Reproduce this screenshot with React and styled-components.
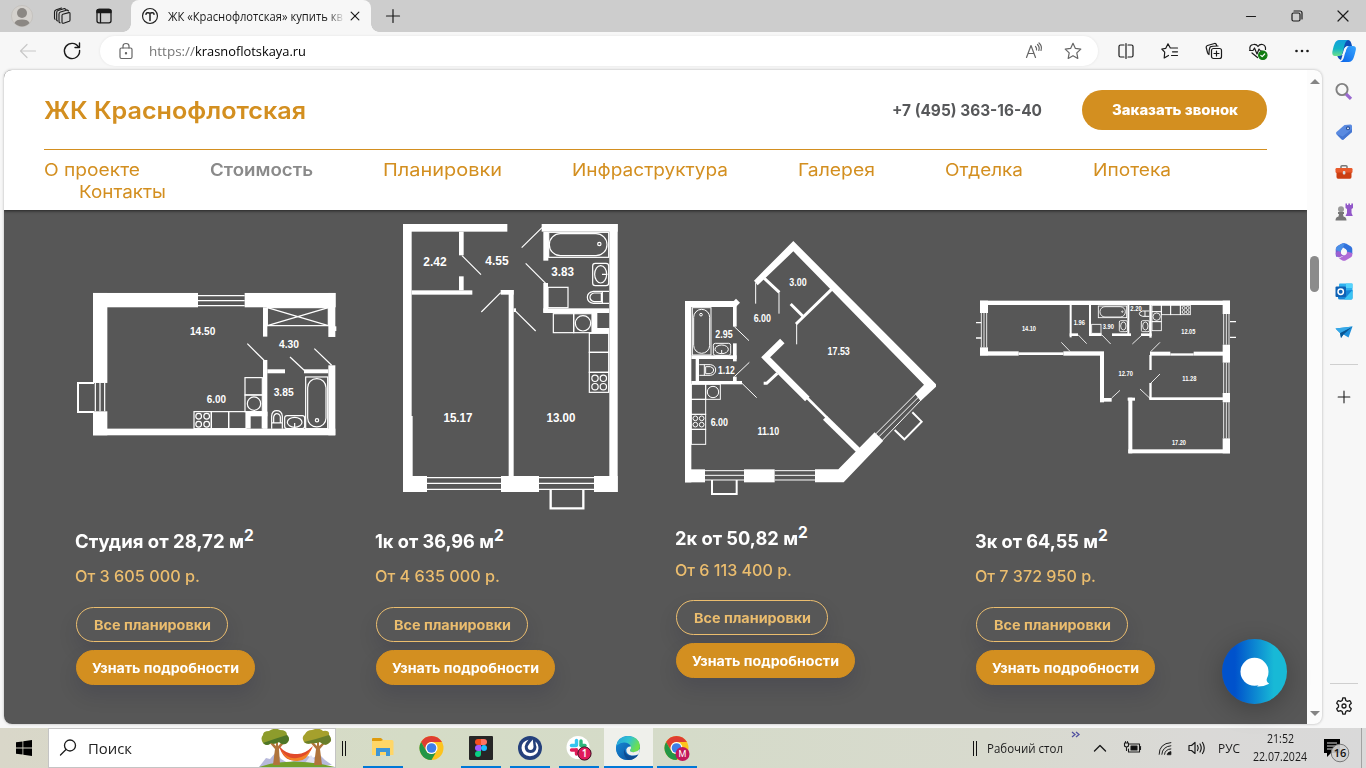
import React, { useLayoutEffect, useRef, useState } from "react";
import styled, { createGlobalStyle, css } from "styled-components";

const GlobalStyle = createGlobalStyle`
  *, *::before, *::after { box-sizing: border-box; }
  html, body { margin: 0; padding: 0; overflow: hidden; }
  body { font-family: "Open Sans", "Noto Sans", sans-serif; color: #1b1b1b; }
  svg { display: block; flex: none; }
`;

const brand = "#d38f20";
const brandLight = "#ebbd6e";
const siteFont = `Inter, "Open Sans", sans-serif`;

/* ---------- text that stretches to a given measure ---------- */

const Measure = styled.span`
  display: inline-block;
  text-align: left;
  white-space: pre;
`;

const Stretch = styled.span`
  display: inline-block;
  transform-origin: 0 50%;
`;

function Fit({ w, children }) {
  const ref = useRef(null);
  const [scale, setScale] = useState(1);
  useLayoutEffect(() => {
    const range = document.createRange();
    range.selectNodeContents(ref.current);
    const natural = range.getBoundingClientRect().width;
    setScale((current) => (w * current) / natural);
  }, [w, children]);
  return (
    <Measure style={{ width: w }}>
      <Stretch ref={ref} style={{ transform: `scaleX(${scale})` }}>
        {children}
      </Stretch>
    </Measure>
  );
}

/* ---------- window frame ---------- */

const Screen = styled.div`
  width: 1366px;
  height: 768px;
  display: flex;
  flex-direction: column;
  background: #f7f7f7;
  overflow: hidden;
`;

const TitleBar = styled.header`
  height: 32px;
  display: flex;
  align-items: center;
  background: #cdcdcd;
`;

const Cell = styled.div`
  width: ${(p) => p.$w}px;
  height: 100%;
  flex: none;
  display: flex;
  align-items: center;
  justify-content: center;
`;

const Tab = styled.div`
  position: relative;
  width: 240px;
  height: 32px;
  margin-left: 4px;
  padding: 0 4px 0 7px;
  display: flex;
  align-items: center;
  background: #f7f7f7;
  border-radius: 8px 8px 0 0;
  &::before,
  &::after {
    content: "";
    position: absolute;
    bottom: 0;
    width: 8px;
    height: 8px;
  }
  &::before {
    left: -8px;
    background: radial-gradient(circle at 0 0, transparent 7.5px, #f7f7f7 8px);
  }
  &::after {
    right: -8px;
    background: radial-gradient(circle at 100% 0, transparent 7.5px, #f7f7f7 8px);
  }
`;

const TabTitle = styled.div`
  width: 178px;
  margin-left: 6px;
  font-size: 12px;
  white-space: nowrap;
  color: #1b1b1b;
  mask-image: linear-gradient(90deg, #000 160px, transparent 177px);
`;

const Spacer = styled.div`
  flex: 1;
`;

const Toolbar = styled.div`
  height: 38px;
  padding-left: 6px;
  display: flex;
  align-items: center;
  background: #f7f7f7;
`;

const Address = styled.div`
  width: 998px;
  height: 30px;
  margin: 0 6px;
  padding: 0 6px 0 7px;
  display: flex;
  align-items: center;
  background: #fff;
  border-radius: 15px;
  box-shadow: 0 0 3px rgba(0, 0, 0, 0.08);
`;

const Url = styled.div`
  margin-left: 4px;
  font-size: 13.5px;
  color: #000;
  white-space: nowrap;
`;

const UrlScheme = styled.span`
  color: #767676;
`;

/* ---------- viewport ---------- */

const Body = styled.div`
  height: 658px;
  padding-left: 4px;
  display: flex;
`;

const Viewport = styled.div`
  width: 1318px;
  height: 654px;
  display: flex;
  border-radius: 8px;
  overflow: hidden;
  background: #fcfcfc;
  box-shadow: 0 0 3px rgba(0, 0, 0, 0.28);
`;

const Site = styled.main`
  width: 1303px;
  overflow: hidden;
  font-family: ${siteFont};
  background: #575757;
`;

const SiteHeader = styled.div`
  position: relative;
  height: 140px;
  padding: 0 40px;
  background: #fff;
  box-shadow: 0 1px 3px rgba(0, 0, 0, 0.6);
`;

const Masthead = styled.div`
  height: 80px;
  display: flex;
  align-items: center;
  border-bottom: 1px solid ${brand};
`;

const Brand = styled.h1`
  margin: 0;
  padding-top: 2px;
  flex: 1;
  font-size: 24px;
  font-weight: 600;
  color: ${brand};
`;

const Phone = styled.div`
  width: 150px;
  margin-right: 40px;
  padding-top: 1px;
  font-size: 16px;
  font-weight: 700;
  color: #57585a;
`;

const CallButton = styled.button`
  width: 185px;
  height: 40px;
  padding: 0;
  border: 0;
  border-radius: 20px;
  background: ${brand};
  color: #fff;
  font: 800 14px ${siteFont};
`;

const Nav = styled.nav`
  padding-top: 9px;
  display: flex;
  flex-wrap: wrap;
  line-height: 22px;
  font-size: 17.5px;
`;

const NavItem = styled.a`
  width: ${(p) => p.$w}px;
  margin: 0 35px;
  color: ${brand};
  white-space: nowrap;
  ${(p) => p.$first && css`margin-left: 0;`}
  ${(p) => p.$active && css`color: #8a8a8a; font-weight: 600;`}
`;

const Cards = styled.section`
  padding-left: 71px;
  display: flex;
`;

const Card = styled.article`
  width: 300px;
  display: flex;
  flex-direction: column;
  align-items: flex-start;
`;

const CardTitle = styled.h2`
  height: 28px;
  margin: ${(p) => (p.$raised ? 4 : 7)}px 0 0;
  display: flex;
  align-items: center;
  font-size: 18.5px;
  font-weight: 700;
  color: #fff;
`;

const Power = styled.sup`
  align-self: flex-start;
  font-size: 15.5px;
  line-height: 18px;
  font-weight: 700;
`;

const Price = styled.div`
  height: 30px;
  margin-top: ${(p) => (p.$raised ? 3 : 6)}px;
  display: flex;
  align-items: center;
  font-size: 16px;
  font-weight: 500;
  color: ${brandLight};
`;

const Pill = styled.button`
  width: ${(p) => (p.$outline ? 152 : 179)}px;
  height: 35px;
  margin: ${(p) => p.$top}px 0 0 1px;
  padding: 0;
  border: 1px solid ${(p) => (p.$outline ? brandLight : brand)};
  border-radius: 17.5px;
  background: ${(p) => (p.$outline ? "transparent" : brand)};
  color: ${(p) => (p.$outline ? brandLight : "#fff")};
  font: 700 13px ${siteFont};
  box-shadow: 0 10px 20px rgba(0, 11, 48, 0.12);
  white-space: nowrap;
`;

const Chat = styled.div`
  position: absolute;
  left: 1222px;
  top: 639px;
  width: 65px;
  height: 65px;
  display: flex;
  align-items: center;
  justify-content: center;
  border-radius: 50%;
  background: linear-gradient(90deg, #0052cc 20%, #18b9d6 80%);
  box-shadow: 0 6px 24px rgba(0, 0, 0, 0.25);
`;

const Scrollbar = styled.div`
  width: 15px;
  padding: 9px 0 8px;
  display: flex;
  flex-direction: column;
  align-items: center;
`;

const Arrow = styled.i`
  border: 5px solid transparent;
  ${(p) => (p.$down ? "border-top-color: #858585; border-bottom-width: 0;" : "border-bottom-color: #858585; border-top-width: 0;")}
`;

const Thumb = styled.div`
  width: 9px;
  height: 36px;
  margin-top: 172px;
  border-radius: 5px;
  background: #8b8b8b;
`;

const Sidebar = styled.aside`
  width: 44px;
  height: 656px;
  padding-top: 2px;
  display: flex;
  flex-direction: column;
  align-items: center;
`;

const SideItem = styled.div`
  height: 40px;
  margin-top: ${(p) => p.$gap || 0}px;
  display: flex;
  align-items: center;
  justify-content: center;
`;

const Rule = styled.div`
  width: 28px;
  height: 1px;
  flex: none;
  margin-top: ${(p) => p.$gap || 0}px;
  background: #cfcfcf;
`;

/* ---------- taskbar ---------- */

const Taskbar = styled.footer`
  height: 40px;
  display: flex;
  align-items: stretch;
  background: linear-gradient(90deg, #d9d7c9 0, #d5dcc6 30%, #d5dbc9 50%, #d8dace 72%, #dad9d7 88%, #d9d9d9 100%);
`;

const Search = styled.div`
  width: 288px;
  padding-left: 9px;
  display: flex;
  align-items: center;
  border: 1px solid #c4c4c4;
  background: #fff;
  font-size: 14.5px;
  color: #222;
`;

const SearchText = styled.div`
  flex: 1;
  margin-left: 10px;
`;

const Grip = styled.div`
  width: 4px;
  height: 15px;
  margin: 13px ${(p) => p.$right}px 0 ${(p) => p.$left}px;
  flex: none;
  border: solid #111;
  border-width: 0 1px;
`;

const Task = styled.div`
  width: 49px;
  display: flex;
  flex-direction: column;
  align-items: center;
  justify-content: space-between;
  padding-top: 7px;
  background: ${(p) => (p.$active ? "#eff0eb" : "transparent")};
  &::after {
    content: "";
    width: ${(p) => (p.$active ? 49 : 40)}px;
    height: 2px;
    background: ${(p) => (p.$open ? "#0078d7" : "transparent")};
  }
`;

const DesktopLabel = styled.div`
  width: 81px;
  align-self: center;
  font-size: 12px;
`;

const More = styled.div`
  width: 16px;
  padding-top: 3px;
`;

const Clock = styled.div`
  width: 68px;
  display: flex;
  flex-direction: column;
  align-items: center;
  font-size: 12px;
  line-height: 18px;
  padding-top: 2px;
`;

const Lang = styled.div`
  width: 34px;
  display: flex;
  align-items: center;
  justify-content: center;
  font-size: 12px;
`;

const ShowDesktop = styled.div`
  width: 5px;
  border-left: 1px solid #a2a2a2;
`;

/* ---------- icons ---------- */

function Icon({ s = 20, c = "#1b1b1b", w = 1.2, children }) {
  return (
    <svg width={s} height={s} viewBox="0 0 20 20" fill="none" stroke={c} strokeWidth={w} strokeLinecap="round" strokeLinejoin="round">
      {children}
    </svg>
  );
}

const Profile = () => (
  <svg width="22" height="22" viewBox="0 0 22 22">
    <circle cx="11" cy="11" r="10.6" fill="#d4d1cd" stroke="#bdbab6" strokeWidth=".6" />
    <circle cx="11" cy="8" r="5" fill="#8b8783" />
    <path d="M3.5 18a7.7 4.5 0 0 1 15 0 10 10 0 0 1-15 0Z" fill="#8b8783" />
  </svg>
);

const Workspaces = () => (
  <Icon w={1.1}>
    <path d="M9.800 8.300 15.800 6.600Q17 6.400 17 7.600V14Q17 15 16.200 15.300L10.600 17.200Q9 17.600 9 16V9.500Q9 8.600 9.800 8.300Z" />
    <path d="M14.300 4 7.500 6Q6 6.500 6 8V16L7 16.800M11.500 2.500 5 4.500Q3.700 5 3.700 6.500V14.300L4.500 15M8.500 2 3.300 3.800Q1.500 4.500 1.500 6V12Q1.500 13 2 13.300M14.300 4 15.500 5M11.500 2.500 13 3.500" />
  </Icon>
);

const TabPane = () => (
  <Icon w={1.3}>
    <rect x="3" y="3.300" width="14" height="13.500" rx="2" />
    <path d="M3 5Q3 3.300 5 3.300H15Q17 3.300 17 5V6.500H3Z" fill="#1b1b1b" />
    <path d="M6.500 7V16.500" />
  </Icon>
);

const Favicon = () => (
  <Icon s={18} c="#222" w={1.3}>
    <circle cx="10" cy="10" r="8.300" />
    <path d="M5.500 8Q6 6 8 6.500L10 7 12 6.500Q14 6 14.500 8M10 7V15" strokeWidth="1.700" />
  </Icon>
);

const Cross = ({ s = 20 }) => (
  <Icon s={s} w={1.3}>
    <path d="M5.700 5.700 14.300 14.300M14.300 5.700 5.700 14.300" />
  </Icon>
);

const Plus = ({ s = 20 }) => (
  <Icon s={s}>
    <path d="M10 3.500V16.500M3.500 10H16.500" />
  </Icon>
);

const Copilot = () => (
  <svg width="24" height="22" viewBox="0 0 24 22">
    <defs>
      <linearGradient id="cpA" x1="0" y1="0" x2="0" y2="1">
        <stop offset="0" stopColor="#13a0dc" />
        <stop offset=".55" stopColor="#13b5c6" />
        <stop offset="1" stopColor="#6fe08a" />
      </linearGradient>
      <linearGradient id="cpB" x1="1" y1="0" x2="0" y2="1">
        <stop offset="0" stopColor="#37a6ff" />
        <stop offset="1" stopColor="#0a62e8" />
      </linearGradient>
    </defs>
    <path d="M7 0H16Q18.500 0 19.500 4L20 6H16Q13.500 6 12.500 9L9 20Q6 19 5 15L3 10Z" fill="#0d4fb8" />
    <path d="M7 0H16Q13.500 1 12.500 5L10.500 13Q10 16 7 16H3Q0 16 .3 12Q2 4 3.500 2Q5 0 7 0Z" fill="url(#cpA)" />
    <path d="M17 6H21Q24.500 6 23.800 10Q22 18 20.500 20Q19 22 17 22H8Q11 21 12 17L14 9Q15 6 17 6Z" fill="url(#cpB)" />
    <path d="M14.500 6.500H16.500Q14.800 7.500 14.300 9.500L13.300 12.500Q12.500 15 9.500 15.500 10.500 14.500 11.200 12L12 9Q12.700 7 14.500 6.500Z" fill="#f5fbff" />
  </svg>
);

const SideSearch = () => (
  <svg width="20" height="20" viewBox="0 0 20 20" fill="none">
    <circle cx="8" cy="7.500" r="5.600" stroke="#818181" strokeWidth="1.900" />
    <path d="M12 12 17 16.800" stroke="#9a69cf" strokeWidth="3.200" />
  </svg>
);

const SideTag = () => (
  <svg width="20" height="20" viewBox="0 0 20 20">
    <path d="M10.500 3 16.500 2.500Q18 2.500 18 4V10L9.500 17.500Q8.500 18.200 7.500 17.200L2.300 12Q1.500 11 2.500 10Z" fill="#5a8ae0" />
    <path d="M2.300 12 7.500 17.200Q8.500 18 9.500 17.500L18 10V7L8.700 14.500Z" fill="#4677d2" />
    <circle cx="14" cy="6.300" r="2" fill="#264f9b" />
    <circle cx="14" cy="6.300" r=".9" fill="#fff" />
  </svg>
);

const SideTools = () => (
  <svg width="20" height="20" viewBox="0 0 20 20">
    <path d="M7 6V4.500Q7 3.700 8 3.700H12Q13 3.700 13 4.500V6" fill="none" stroke="#777" strokeWidth="1.500" />
    <rect x="1.500" y="6" width="17" height="5" rx="1.200" fill="#e8592a" />
    <path d="M2.500 10.500H17.500V15Q17.500 16.700 16 16.700H4Q2.500 16.700 2.500 15Z" fill="#cb3f12" />
    <rect x="8.800" y="9" width="2.600" height="3.500" rx="1" fill="#d6e0e4" />
  </svg>
);

const SideGames = () => (
  <svg width="20" height="20" viewBox="0 0 20 20">
    <path d="M11.500 1.500H13V3H14.300V1.500H16V3H17.300V1.500H19V6L17.500 7V11L18.800 14H11.500L13 11V7L11.500 6Z" fill="#9257c9" />
    <circle cx="7" cy="7.300" r="3" fill="#999" />
    <path d="M4 10H10V12H9L9.500 14.500Q12.500 15 12.500 18.500H1.500Q1.500 15 4.500 14.500L5 12H4Z" fill="#777" />
  </svg>
);

const Side365 = () => (
  <svg width="20" height="20" viewBox="0 0 20 20">
    <path d="M7 2Q9 1 11 1.300L8 7Q6.500 8 6.700 10L6.500 14 2.500 15Q1.500 14 1.700 11V7Q2 5 4 3.800Z" fill="#6f62d2" />
    <path d="M8.500 1.500H12L17 4.500Q18.300 5.500 18.300 7V12L12.800 12V9.500Q13 8 11.500 7L7.500 4.500Z" fill="#3272dc" />
    <path d="M18.300 11V13Q18.300 14.500 17 15.300L12 18.300Q10 19.300 8 18.300L5 16.500 10.500 13.200Q12.800 12.500 12.800 9.500Z" fill="#b06bd6" />
    <path d="M1.700 11Q2 14.500 5 15.500L10.500 13.200Q7 13 6.700 10V7Z" fill="#9c5fd0" />
    <path d="M7 2Q9 1 11 1.300L8 7 6.700 10 2 8Q1.500 5 4 3.800Z" fill="#4a8fe6" />
    <circle cx="10" cy="10" r="2.900" fill="#f7f7f7" />
  </svg>
);

const SideOutlook = () => (
  <svg width="20" height="20" viewBox="0 0 20 20">
    <rect x="5" y="1.500" width="13.500" height="9" rx="1" fill="#2eb1ef" />
    <path d="M12 1.500H18.500V6H12Z" fill="#54d4fc" />
    <path d="M4 9 18.500 8V16Q18.500 17.500 17 17.500H6Q4 17.500 4 16Z" fill="#1585d8" />
    <path d="M18.500 8 10 17.500H17Q18.500 17.500 18.500 16Z" fill="#39c4f3" />
    <rect x="1.500" y="4.500" width="10.500" height="10.500" rx="1" fill="#0f62b5" />
    <circle cx="6.700" cy="9.700" r="2.700" fill="none" stroke="#fff" strokeWidth="1.500" />
  </svg>
);

const SideDrop = () => (
  <svg width="20" height="20" viewBox="0 0 20 20">
    <path d="M1.500 6.500 18.500 4.500 14.500 15.500 9.500 12.500 7 16 6 11Z" fill="#1d8fdb" />
    <path d="M6 11 18.500 4.500 9.500 12.500 7 16Z" fill="#0a5693" />
    <path d="M1.500 6.500 18.500 4.500 6 11Z" fill="#36a9e8" />
  </svg>
);

const Gear = () => (
  <Icon w={1.300}>
    <path d="M8.200 4.500 8.800 2Q10 1.700 11.200 2L11.800 4.500 13.400 5.400 15.800 4.600Q17 6 17.300 7.300L15.500 9V11L17.300 12.700Q17 14 15.800 15.400L13.400 14.600 11.800 15.500 11.200 18Q10 18.300 8.800 18L8.200 15.500 6.600 14.600 4.200 15.400Q3 14 2.700 12.700L4.500 11V9L2.700 7.300Q3 6 4.200 4.600L6.600 5.400Z" />
    <circle cx="10" cy="10" r="2" />
  </Icon>
);

const Windows = () => (
  <svg width="16" height="16" viewBox="0 0 16 16">
    <path d="M0 2.300 6.500 1.400V7.500H0ZM7.300 1.200 16 0V7.500H7.300ZM0 8.400H6.500V14.600L0 13.700ZM7.300 8.400H16V16L7.300 14.700Z" fill="#000" />
  </svg>
);

const Hammock = () => (
  <svg width="76" height="38" viewBox="0 0 76 38">
    <path d="M0 38 7 29 11 30 17 23 22 30 29 34 49 27 54 29 60 25 66 31 73 36Z" fill="#b7b9db" />
    <path d="M46 34 52 26 58 34Z" fill="#dfe0f2" />
    <path d="M0 38Q32 27 76 38Z" fill="#72a12a" />
    <path d="M14 36 16 20 9 12 11 11 17 17 17 8H19V17L25 11 27 12 20 20 21 36Z" fill="#b0743b" />
    <path d="M55 36 57 20 50 12 52 11 58 17 58 8H60V17L67 11 68 12 61 20 63 36Z" fill="#b0743b" />
    <path d="M4 6Q4 2 10 2Q16-2 21 1Q28 1 28 6Q32 10 28 14Q24 17 20 13Q15 16 12 14Q8 18 4 14Q1 9 4 6Z" fill="#8d9c2c" />
    <path d="M28 6Q32 10 28 14Q24 17 20 13Q15 16 12 14Q8 18 4 14Q15 10 28 6Z" fill="#4e7628" />
    <path d="M46 5Q48 1 53 1Q60-2 64 2Q71 1 70 6Q74 11 70 14Q66 18 61 13Q55 15 53 14Q48 16 45 13Q42 8 46 5Z" fill="#a5a02c" />
    <path d="M70 6Q74 11 70 14Q66 18 61 13Q55 15 53 14Q48 16 45 13Q58 10 70 6Z" fill="#687e2b" />
    <path d="M20 17Q25 34 39 31Q50 28 54 17Q45 26 37 25Q28 26 20 17Z" fill="#e14a2a" />
    <path d="M22 21Q29 31 38 29Q47 28 52 20Q48 33 37 32Q26 31 22 21Z" fill="#f38326" />
  </svg>
);

const Folder = () => (
  <svg width="24" height="24" viewBox="0 0 24 24">
    <path d="M1 4Q1 3 2 3H10L12 5V9H1Z" fill="#df9b0c" />
    <path d="M1 6H10L12 5H21Q22.500 5 22.500 6.500V20H1Z" fill="#ffd667" />
    <path d="M5 13H19V21H15V17H9V21H5Z" fill="#3f96d6" />
  </svg>
);

const ChromeMark = ({ children }) => (
  <svg width="26" height="26" viewBox="0 0 26 26">
    <circle cx="12.500" cy="13" r="12" fill="#fcc31e" />
    <path d="M2.100 7A12 12 0 0 1 22.900 7H12.500A6 6 0 0 0 7.300 16Z" fill="#df3d32" />
    <path d="M2.100 7A12 12 0 0 0 12.500 25L17.700 16A6 6 0 0 1 7.300 16Z" fill="#239646" />
    <circle cx="12.500" cy="13" r="6" fill="#fff" />
    <circle cx="12.500" cy="13" r="4.800" fill="#3f7ee8" />
    {children}
  </svg>
);

const FigmaMark = () => (
  <svg width="26" height="26" viewBox="0 0 26 26">
    <rect x="1" y="1" width="24" height="24" rx="1" fill="#262626" />
    <path d="M13 4H10a3 3 0 0 0 0 6H13Z" fill="#f24e1e" />
    <path d="M13 4H16a3 3 0 0 1 0 6H13Z" fill="#ff7262" />
    <path d="M13 10H10a3 3 0 0 0 0 6H13Z" fill="#a259ff" />
    <circle cx="16" cy="13" r="3" fill="#1abcfe" />
    <path d="M13 16H10a3 3 0 1 0 3 3Z" fill="#0acf83" />
  </svg>
);

const Mattermost = () => (
  <svg width="26" height="26" viewBox="0 0 26 26">
    <circle cx="13" cy="13" r="12" fill="#24407c" />
    <path d="M11.500 4.800Q4.500 6.500 4.500 13Q5 20.500 13 21.300Q21 20.500 21.500 13.500Q21.500 9 18.500 6.500L18.800 9.500Q20 11.500 19 14.500Q17.500 18 13.500 18Q7.500 17.500 7.700 11.500Q8.200 8 11.500 4.800Z" fill="#fff" />
    <path d="M15.800 4.500 16.500 11.500Q16.500 14.700 13.500 15Q10.500 14.700 10.800 11.500Q11.500 9.500 15.800 4.500Z" fill="#fff" />
  </svg>
);

const SlackMark = () => (
  <svg width="26" height="26" viewBox="0 0 26 26">
    <circle cx="12" cy="12.500" r="11.500" fill="#fff" />
    <g strokeWidth="3.400" strokeLinecap="round">
      <path d="M10.500 5.500V10" stroke="#36c5f0" />
      <path d="M5.500 10.500H10" stroke="#36c5f0" />
      <path d="M15 6V10.500" stroke="#2eb67d" />
      <path d="M15.500 10.500H19" stroke="#2eb67d" />
      <path d="M5.500 15H10.500" stroke="#e01e5a" />
      <path d="M10.500 15V19" stroke="#e01e5a" />
      <path d="M15 15H19" stroke="#ecb22e" />
    </g>
    <circle cx="18.500" cy="18.500" r="6.600" fill="#e0195b" stroke="#3c1022" strokeWidth="1" />
    <text x="18.500" y="22" textAnchor="middle" fontSize="10" fontWeight="600" fontFamily="Open Sans" fill="#fff">1</text>
  </svg>
);

const EdgeMark = () => (
  <svg width="26" height="26" viewBox="0 0 26 26">
    <defs>
      <linearGradient id="edA" x1="0" y1="0" x2="1" y2=".4">
        <stop offset="0" stopColor="#249de0" />
        <stop offset=".55" stopColor="#31c4cf" />
        <stop offset="1" stopColor="#6fe04c" />
      </linearGradient>
      <linearGradient id="edB" x1="0" y1="0" x2="1" y2="1">
        <stop offset="0" stopColor="#1687d4" />
        <stop offset="1" stopColor="#0c529d" />
      </linearGradient>
    </defs>
    <circle cx="13" cy="13" r="12" fill="#1275c8" />
    <path d="M1 12Q2.500 1 13 1Q24 1.500 25 11Q25 17 18.500 17.300Q14.500 17 15 15Q16.500 13.500 16 11.500Q14 7.500 9 7.500Q3.500 8 1 12Z" fill="url(#edA)" />
    <path d="M1 13Q4 7.500 9.500 8Q14.500 8.500 16 12Q12 9.500 9.500 14Q7.500 22 15 24.800Q2 26 1 13Z" fill="url(#edB)" />
    <path d="M9.500 14Q10 20.500 17 21Q20.500 21 23.500 19.200Q20 25 13.500 25Q7 21 9.500 14Z" fill="#0f4c92" />
    <path d="M16 11.500Q16.500 13.500 15 15Q14.500 17 18.500 17.300Q22 17.300 25 14Q24.500 17.500 23.500 19.200Q20 21 16.500 20.500Q11 19.500 11.300 14.500Q12.500 11 16 11.500Z" fill="#eff0eb" />
  </svg>
);

/* ---------- floor plans ---------- */

const wallBox = ([x, y, w, h], i) => <rect key={i} x={x} y={y} width={w - x} height={h - y} fill="#fff" stroke="none" />;
const lineBox = ([x, y, w, h], i) => <rect key={i} x={x} y={y} width={w - x} height={h - y} />;

function Plan({ x, ox, oy, walls, boxes = [], lines = "", labels, size, lineWidth = 3.6, children }) {
  return (
    <svg width="270" height="310" viewBox={`${x} 210 270 310`}>
      <g transform={`translate(${ox} ${oy}) scale(.33333)`} fill="none" stroke="#fff" strokeWidth={lineWidth}>
        {walls.map(wallBox)}
        {boxes.map(lineBox)}
        <path d={lines} />
        {children}
        {labels.map(([t, lx, ly, w], i) => (
          <text key={i} x={lx} y={ly + size * 0.36} textAnchor="middle" textLength={w} fontSize={size} fontWeight="700" fontFamily="Liberation Sans, sans-serif" fill="#fff" stroke="none" lengthAdjust="spacingAndGlyphs">
            {t}
          </text>
        ))}
      </g>
    </svg>
  );
}

const Burners = ({ x, y, d, r }) => (
  <>
    <circle cx={x} cy={y} r={r} />
    <circle cx={x + d} cy={y} r={r} />
    <circle cx={x} cy={y + d} r={r} />
    <circle cx={x + d} cy={y + d} r={r} />
  </>
);

const StudioPlan = () => (
  <Plan
    x={75} ox={60} oy={270.3} size={35}
    walls={[
      [99, 68, 414, 111], [554, 68, 827, 111], [99, 68, 142, 338], [99, 423, 142, 495], [99, 475, 826, 495],
      [805, 68, 826, 200], [805, 285, 826, 495], [609, 111, 622, 199], [609, 269, 622, 475], [622, 297, 675, 309],
      [732, 297, 805, 309], [558, 424, 622, 438], [558, 424, 572, 475], [605, 424, 622, 475], [820, 168, 829, 182],
    ]}
    boxes={[
      [622, 112, 805, 166], [555, 322, 607, 374], [555, 374, 607, 424], [402, 424, 454, 475], [454, 424, 506, 475],
      [506, 424, 558, 475], [737, 320, 803, 475],
    ]}
    lines="M414 76H554M414 91H554M414 106H554M106 338V423M120 338V423M134 338V423M622 112 805 166M805 112 622 166M562 220 612 270M690 260 735 302M763 235 815 285M704 458V472"
    labels={[["14.50", 428, 183, 76], ["4.30", 687, 221, 60], ["3.85", 671, 366, 60], ["6.00", 469, 386, 58]]}
  >
    <path d="M102 338H54V425H102" strokeWidth="6" />
    <circle cx="582" cy="400" r="20" />
    <Burners x={416} y={438} d={24} r={8.500} />
    <rect x="743" y="325" width="55" height="145" rx="27" />
    <circle cx="771" cy="450" r="5" />
    <rect x="674" y="436" width="60" height="39" rx="7" />
    <ellipse cx="704" cy="456" rx="22" ry="15" />
    <path d="M635 475V437Q636 421 650 421Q665 421 667 437V475M635 458H667M641 457V440Q643 430 650 430Q659 430 661 440V457" />
  </Plan>
);

const OneRoomPlan = () => (
  <Plan
    x={375} ox={390} oy={215} size={40}
    walls={[
      [39, 27, 65, 831], [39, 27, 352, 50], [455, 27, 683, 50], [658, 27, 683, 831], [39, 783, 111, 831],
      [333, 783, 447, 831], [612, 783, 683, 831], [207, 50, 221, 121], [207, 184, 221, 226], [65, 226, 247, 239],
      [332, 225, 371, 239], [356, 225, 371, 783], [371, 280, 378, 291], [460, 50, 475, 137], [460, 204, 474, 293],
      [460, 280, 658, 294], [606, 294, 622, 354], [606, 339, 658, 354], [62, 603, 68, 783],
    ]}
    boxes={[
      [474, 217, 534, 278], [490, 296, 551, 353], [551, 296, 606, 353], [598, 355, 656, 412], [598, 412, 656, 472],
      [598, 472, 656, 532], [476, 52, 656, 127],
    ]}
    lines="M111 788H333M111 805H333M111 823H333M447 788H612M447 805H612M447 823H612M395 98 456 38M216 122 273 179M407 145 467 205M332 233 274 291M375 287 437 348M636 178H652"
    labels={[["2.42", 135, 138, 70], ["4.55", 321, 137, 70], ["3.83", 518, 169, 68], ["15.17", 204, 608, 87], ["13.00", 513, 608, 87]]}
  >
    <path d="M482 823V880H580V823" strokeWidth="7" />
    <circle cx="579" cy="325" r="23" />
    <Burners x={615} y={490} d={25} r={9.500} />
    <rect x="478" y="56" width="173" height="66" rx="33" />
    <circle cx="628" cy="87" r="5" />
    <rect x="608" y="145" width="48" height="67" rx="8" />
    <ellipse cx="632" cy="178" rx="18" ry="26" />
    <path d="M657 229H610Q592 232 592 247Q592 263 610 265H657M637 229V265M634 234H612Q600 237 600 247Q600 257 612 260H634Z" />
  </Plan>
);

const TwoRoomPlan = () => (
  <Plan
    x={675} ox={670} oy={230} size={32} lineWidth={3}
    walls={[
      [45, 213, 64, 757], [45, 213, 197, 231], [189, 220, 200, 290], [64, 376, 200, 387], [189, 340, 200, 394],
      [64, 453, 216, 463], [77, 387, 87, 453], [189, 440, 200, 460], [45, 718, 105, 757], [222, 718, 314, 757],
    ]}
    boxes={[
      [64, 463, 107, 508], [64, 508, 107, 553], [64, 553, 107, 598], [64, 598, 107, 643], [107, 463, 151, 508], [67, 233, 123, 375],
    ]}
    lines="M105 722H222M105 736H222M105 750H222M314 722H435M314 736H435M314 750H435M739 490 617 612M747 500 627 620M755 508 638 630M257 158V221M327 187V251M380 282V343M193 290 237 332M193 440 238 397M216 460 260 503M155 360V371"
    labels={[["3.00", 384, 155, 52], ["6.00", 277, 265, 52], ["2.95", 162, 311, 52], ["17.53", 506, 362, 67], ["1.12", 169, 420, 50], ["6.00", 148, 577, 52], ["11.10", 295, 603, 65]]}
  >
    <g fill="#fff" stroke="none">
      <path d="M370 33 798 463V470L752 513 735 492 762 464 370 64 263 166 252 152Z" />
      <path d="M435 718H505L614 607 640 632 521 757H435Z" />
      <path d="M198 206 210 218 198 230 186 218Z" />
    </g>
    <path d="M283 145 328 187M487 176 378 282M362 222 398 258M322 430 290 460H281" strokeWidth="9" />
    <path d="M337 333 287 382 412 507" strokeWidth="19" />
    <path d="M412 504 470 562" strokeWidth="8" />
    <path d="M465 563 568 664" strokeWidth="17" />
    <path d="M126 750V792H200V750M727 547 755 575 703 628 674 600" strokeWidth="6" />
    <circle cx="129" cy="486" r="17" />
    <Burners x={76} y={565} d={19} r={7} />
    <rect x="71" y="238" width="48" height="132" rx="24" />
    <circle cx="93" cy="254" r="4" />
    <rect x="130" y="340" width="52" height="36" rx="6" />
    <ellipse cx="155" cy="358" rx="20" ry="13" />
    <path d="M88 404H122Q137 407 137 420Q137 433 122 436H88M103 404V436M107 410H121Q131 413 131 420Q131 428 121 431H107Z" />
  </Plan>
);

const ThreeRoomPlan = () => (
  <Plan
    x={975} ox={960} oy={280} size={23} lineWidth={2.600}
    walls={[
      [60, 62, 810, 75], [60, 62, 84, 99], [60, 202, 84, 226], [60, 214, 176, 227], [176, 217, 310, 225], [310, 214, 432, 227],
      [329, 75, 335, 172], [329, 160, 354, 168], [387, 75, 393, 168], [387, 160, 425, 168], [456, 160, 513, 168],
      [502, 75, 508, 168], [568, 75, 575, 173], [543, 160, 575, 168], [788, 62, 810, 102], [788, 194, 810, 248],
      [788, 339, 810, 367], [788, 475, 810, 520], [570, 215, 631, 227], [631, 220, 701, 227], [701, 215, 790, 227],
      [420, 220, 432, 367], [430, 354, 455, 365], [503, 353, 525, 362], [505, 353, 517, 520], [505, 508, 810, 520],
      [568, 352, 790, 360], [568, 225, 575, 270], [568, 309, 575, 358],
    ]}
    boxes={[
      [395, 133, 423, 160], [415, 78, 500, 113], [576, 76, 604, 95], [576, 95, 604, 125], [576, 125, 604, 152],
      [604, 76, 632, 104], [632, 76, 661, 104], [661, 76, 691, 104],
    ]}
    lines="M64 99V202M72 99V202M80 99V202M791 102V194M799 102V194M807 102V194M791 248V339M799 248V339M807 248V339M791 367V475M799 367V475M807 367V475M304 187 330 214M354 164 380 191M425 164 452 192M517 192 545 166M600 187 572 215M572 310 600 282M455 354 480 331M540 327 570 355"
    labels={[["14.10", 207, 146, 42], ["1.96", 358, 126, 34], ["3.90", 445, 139, 34], ["2.20", 528, 85, 34], ["12.05", 685, 153, 42], ["12.70", 497, 281, 43], ["11.28", 688, 295, 42], ["17.20", 657, 488, 42]]}
  >
    <path d="M48 128H64M48 174H64M810 125H828M810 172H828" strokeWidth="4" />
    <rect x="420" y="80" width="76" height="31" rx="15" />
    <circle cx="487" cy="95" r="2" />
    <rect x="478" y="122" width="24" height="33" rx="4" />
    <ellipse cx="490" cy="138" rx="8" ry="12" />
    <rect x="544" y="122" width="24" height="33" rx="4" />
    <ellipse cx="556" cy="138" rx="8" ry="12" />
    <path d="M568 93H548Q538 95 538 101Q538 107 548 109H568M555 93V109" strokeWidth="3" />
    <circle cx="590" cy="110" r="11" />
    <Burners x={671} y={84} d={12} r={4.500} />
  </Plan>
);

/* ---------- content ---------- */

const navItems = [
  ["О проекте", 96], ["Стоимость", 103], ["Планировки", 119], ["Инфраструктура", 156],
  ["Галерея", 77], ["Отделка", 78], ["Ипотека", 78], ["Контакты", 87],
];

const flats = [
  { title: "Студия от 28,72 м", w: 169, price: "От 3 605 000 р.", pw: 125, plan: StudioPlan },
  { title: "1к от 36,96 м", w: 119, price: "От 4 635 000 р.", pw: 125, plan: OneRoomPlan },
  { title: "2к от 50,82 м", w: 123, price: "От 6 113 400 р.", pw: 117, plan: TwoRoomPlan, raised: true },
  { title: "3к от 64,55 м", w: 123, price: "От 7 372 950 р.", pw: 121, plan: ThreeRoomPlan },
];

const sideIcons = [SideSearch, SideTag, SideTools, SideGames, Side365, SideOutlook, SideDrop];

function Flat({ flat }) {
  const { title, w, price, pw, plan: PlanDrawing, raised } = flat;
  return (
    <Card>
      <PlanDrawing />
      <CardTitle $raised={raised}>
        <Fit w={w}>{title}</Fit>
        <Power>2</Power>
      </CardTitle>
      <Price $raised={raised}><Fit w={pw}>{price}</Fit></Price>
      <Pill $outline $top={raised ? 15 : 16}><Fit w={117}>Все планировки</Fit></Pill>
      <Pill $top={8}><Fit w={147}>Узнать подробности</Fit></Pill>
    </Card>
  );
}

export default function App() {
  return (
    <Screen>
      <GlobalStyle />
      <TitleBar>
        <Cell $w={44}><Profile /></Cell>
        <Cell $w={37}><Workspaces /></Cell>
        <Cell $w={46}><TabPane /></Cell>
        <Tab>
          <Cell $w={24}><Favicon /></Cell>
          <TabTitle><Fit w={175}>ЖК «Краснофлотская» купить кв</Fit></TabTitle>
          <Cell $w={18}><Cross s={18} /></Cell>
        </Tab>
        <Cell $w={43}><Plus /></Cell>
        <Spacer />
        <Cell $w={46}><Icon><path d="M5.500 10.500H14.500" /></Icon></Cell>
        <Cell $w={46}>
          <Icon>
            <rect x="5" y="7" width="8" height="8" rx="1.500" />
            <path d="M7 5H13Q15 5 15 7V13" />
          </Icon>
        </Cell>
        <Cell $w={46}><Icon><path d="M5 5 15 15M15 5 5 15" /></Icon></Cell>
      </TitleBar>

      <Toolbar>
        <Cell $w={44}><Icon c="#c8c8c8"><path d="M17.500 10H2.500M9 3.500 2.500 10 9 16.500" /></Icon></Cell>
        <Cell $w={44}><Icon w={1.400}><path d="M16.500 6A7.600 7.600 0 1 0 17.600 9.500M17.500 2V6.500H13" /></Icon></Cell>
        <Address>
          <Cell $w={38}>
            <Icon c="#666">
              <rect x="4" y="7" width="12" height="10.500" rx="1.500" />
              <path d="M7 7V5Q7 2.500 10 2.500Q13 2.500 13 5V7" />
              <circle cx="10" cy="12.200" r=".6" fill="#666" />
            </Icon>
          </Cell>
          <Url><UrlScheme><Fit w={46}>https://</Fit></UrlScheme><Fit w={111}>krasnoflotskaya.ru</Fit></Url>
          <Spacer />
          <Cell $w={40}>
            <Icon c="#666">
              <path d="M2.500 16.500 7 4.500 11.500 16.500M4 12.500H10M11.500 5.500Q13 7 12.500 9M13.500 3.500Q16 6 14.800 9.500M15 2Q18.500 5 17 9.500" />
            </Icon>
          </Cell>
          <Cell $w={38}>
            <Icon c="#666"><path d="M10 2.300 12.400 7.400 17.800 8.100 13.800 11.900 14.800 17.400 10 14.700 5.200 17.400 6.200 11.900 2.200 8.100 7.600 7.400Z" /></Icon>
          </Cell>
        </Address>
        <Cell $w={44}><Icon><path d="M8 4H4.500Q3 4 3 5.500V14.500Q3 16 4.500 16H8M12 4H15.500Q17 4 17 5.500V14.500Q17 16 15.500 16H12M10 2.500V17.500" /></Icon></Cell>
        <Cell $w={44}><Icon><path d="M17.500 7H10.300L8 2.800 5.800 7.300 1.800 8 4.700 11.200 4.200 17 8.500 14.500M12.500 10.800H17.500M11.500 14.500H17.500" /></Icon></Cell>
        <Cell $w={44}>
          <Icon>
            <rect x="7.500" y="7.500" width="10" height="10" rx="2" />
            <path d="M12.500 10V15M10 12.500H15M5 13.500Q4 13 3.500 11.500L2.200 6.500Q2 5 3.500 4.500L10.500 2.500Q12 2.200 12.500 4V5M5 13.500Q5 7 6.500 5.700Q7.500 5 14 5" />
          </Icon>
        </Cell>
        <Cell $w={44}>
          <Icon>
            <path d="M2 9Q1 4 5.500 3.500Q8.500 3 10 5.500Q11.500 3 14.500 3.500Q18 4.500 17.500 8.500M1.500 9.500H5L6.500 7 9 13 11 8 12.500 10H14M4 12 9.500 16.500" />
            <circle cx="14.800" cy="14.300" r="4.200" fill="#107c10" stroke="#107c10" />
            <path d="M12.800 14.300 14.200 15.700 16.700 13" stroke="#fff" />
          </Icon>
        </Cell>
        <Cell $w={44}>
          <Icon><g fill="#1b1b1b" stroke="none"><circle cx="4.500" cy="10" r="1.300" /><circle cx="10" cy="10" r="1.300" /><circle cx="15.500" cy="10" r="1.300" /></g></Icon>
        </Cell>
        <Cell $w={40}><Copilot /></Cell>
      </Toolbar>

      <Body>
        <Viewport>
          <Site>
            <SiteHeader>
              <Masthead>
                <Brand><Fit w={262}>ЖК Краснофлотская</Fit></Brand>
                <Phone><Fit w={150}>+7 (495) 363-16-40</Fit></Phone>
                <CallButton><Fit w={126}>Заказать звонок</Fit></CallButton>
              </Masthead>
              <Nav>
                {navItems.map(([label, w], i) => (
                  <NavItem key={label} $w={w} $first={i === 0} $active={i === 1}><Fit w={w}>{label}</Fit></NavItem>
                ))}
              </Nav>
            </SiteHeader>
            <Cards>
              {flats.map((flat) => <Flat key={flat.title} flat={flat} />)}
            </Cards>
          </Site>
          <Scrollbar>
            <Arrow />
            <Thumb />
            <Spacer />
            <Arrow $down />
          </Scrollbar>
        </Viewport>
        <Sidebar>
          {sideIcons.map((Side, i) => <SideItem key={i}><Side /></SideItem>)}
          <Rule $gap={12} />
          <SideItem $gap={12}><Plus s={18} /></SideItem>
          <Spacer />
          <Rule />
          <SideItem $gap={2}><Gear /></SideItem>
        </Sidebar>
      </Body>

      <Taskbar>
        <Cell $w={48}><Windows /></Cell>
        <Search>
          <Icon s={20} w={1.300}><circle cx="12" cy="7.500" r="5.500" /><path d="M8 11.500 2.500 17" /></Icon>
          <SearchText><Fit w={44}>Поиск</Fit></SearchText>
          <Hammock />
        </Search>
        <Grip $left={6} $right={12.5} />
        <Task $open><Folder /></Task>
        <Task><ChromeMark /></Task>
        <Task $open><FigmaMark /></Task>
        <Task $open><Mattermost /></Task>
        <Task $open><SlackMark /></Task>
        <Task $open $active><EdgeMark /></Task>
        <Task $open>
          <ChromeMark>
            <circle cx="18.500" cy="19" r="7" fill="#c2185b" />
            <text x="18.500" y="22.300" textAnchor="middle" fontSize="9" fontFamily="Roboto" fill="#fff">M</text>
          </ChromeMark>
        </Task>
        <Spacer />
        <Grip $left={0} $right={10} />
        <DesktopLabel><Fit w={76}>Рабочий стол</Fit></DesktopLabel>
        <More>
          <svg width="16" height="8" viewBox="0 0 16 8" fill="none" stroke="#5252a0" strokeWidth="1.300"><path d="M4 1 7 3.500 4 6M8 1 11 3.500 8 6" /></svg>
        </More>
        <Cell $w={32}><Icon w={1.400}><path d="M4.500 13 10 7.500 15.500 13" /></Icon></Cell>
        <Cell $w={32}>
          <Icon w={1.100}>
            <path d="M7.500 6H17.500V14H6.500V11" /><path d="M18.500 8.500V11.500" /><path d="M9 8H15V12H9Z" fill="#111" /><path d="M2.500 5H6.500V8Q4.500 10 2.500 8ZM3.500 5V3.500M5.500 5V3.500M4.500 9V12.500" />
          </Icon>
        </Cell>
        <Cell $w={33}>
          <Icon w={1.100} s={18}>
            <path d="M3.500 17Q3.500 5 16.500 4M6.500 17Q7 8.500 16.500 7.500M9.500 17Q10 11.500 16.500 11" /><path d="M12.500 17Q13 14.500 16.500 14V17Z" fill="#111" />
          </Icon>
        </Cell>
        <Cell $w={31}>
          <Icon w={1.200}>
            <path d="M2 7.500H4.500L8 4.500V15.500L4.500 12.500H2ZM10.500 7.500Q12 10 10.500 12.500M13 6Q15.500 10 13 14M15.500 4.500Q19 10 15.500 15.500" />
          </Icon>
        </Cell>
        <Lang><Fit w={22}>РУС</Fit></Lang>
        <Clock><Fit w={27}>21:52</Fit><Fit w={54}>22.07.2024</Fit></Clock>
        <Cell $w={47}>
          <svg width="30" height="30" viewBox="0 0 30 30">
            <path d="M1 6H17V20H8L4 24V20H1Z" fill="#000" />
            <path d="M4 10H14M4 13H14M4 16H10" stroke="#dadada" />
            <circle cx="17" cy="20" r="8.800" fill="#d2d2d2" fillOpacity=".9" stroke="#777" />
            <text x="17" y="24" textAnchor="middle" fontSize="11" fontWeight="600" fontFamily="Open Sans" fill="#111">16</text>
          </svg>
        </Cell>
        <ShowDesktop />
      </Taskbar>
      <Chat>
        <svg width="30" height="30" viewBox="0 0 30 30">
          <circle cx="14.500" cy="14.800" r="14" fill="#fff" />
          <path d="M27 20Q25.500 24.500 29.200 26.800Q24 29.800 17 29.500Z" fill="#fff" />
        </svg>
      </Chat>
    </Screen>
  );
}
